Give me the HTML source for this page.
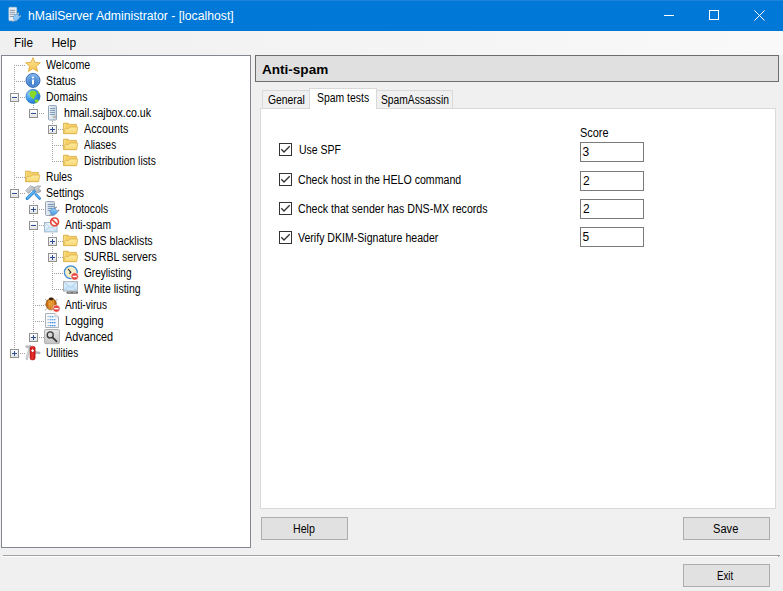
<!DOCTYPE html>
<html><head><meta charset="utf-8">
<style>
*{margin:0;padding:0;box-sizing:border-box}
html,body{width:783px;height:591px;overflow:hidden;background:#f0f0f0;font-family:"Liberation Sans",sans-serif;font-size:11px;color:#000;position:relative}
.a{position:absolute}
.x{position:absolute;white-space:nowrap;line-height:1;transform-origin:0 0}
#title{left:0;top:0;width:783px;height:31px;background:#0078d7;color:#fff}
#title .t{left:28px;top:7px;font-size:12px;line-height:16px;white-space:nowrap}
#menu{left:0;top:31px;width:783px;height:24px;background:linear-gradient(90deg,#f0f0f0,#f9f9f9)}
#menu span{position:absolute;top:4px;font-size:12px;line-height:16px}
#tree{left:1px;top:55px;width:250px;height:493px;background:#fff;border:1px solid #828790}
.tr{position:absolute;height:16px;line-height:16px;white-space:nowrap}
#hdr{left:255px;top:55px;width:524px;height:27px;background:#e0e0e0;border:1px solid #6d6d6d}
#hdr span{position:absolute;left:6px;top:5px;font-size:12.6px;line-height:16px;font-weight:bold;letter-spacing:.5px}
.tab{position:absolute;background:#f0f0f0;border:1px solid #d9d9d9;border-bottom:none;line-height:16px}
.tab span{position:absolute;top:2px}
#page{left:260px;top:108px;width:516px;height:401px;background:#fff;border:1px solid #d9d9d9}
.lbl{position:absolute;white-space:nowrap;line-height:16px}
.tb{position:absolute;width:64px;height:20px;border:1px solid #7a7a7a;background:#fff;line-height:16px}
.tb span{position:absolute;left:2px;top:2px}
.btn{position:absolute;background:#e1e1e1;border:1px solid #adadad;text-align:center;line-height:16px}
.btn span{position:absolute;left:0;right:0;top:3px}
</style></head><body>
<div id="title" class="a">
  <svg class="a" style="left:5px;top:4px" width="20" height="20" viewBox="0 0 20 20">
    <rect x="3.9" y="3.3" width="7.8" height="13.4" rx="0.8" fill="#e9eef2" stroke="#c0c8d0" stroke-width=".7"/>
    <path d="M5 6.3h5.2M5 8.3h5.2M5 10.3h5.2M5 12.5h4" stroke="#8898aa" stroke-width="1"/>
    <path d="M8.2 14.2 C8.4 11.2 10.8 9.6 12.6 10.1 L14.8 12.7 C14.5 15.1 12.1 16.7 9.4 16.5 Z" fill="#8cc6f6" stroke="#5b9ad6" stroke-width=".6"/>
    <path d="M12.6 10.1 L13.8 9M14.8 12.7 L15.8 11.6M9 16 L7.6 17.4" stroke="#e0d0b0" stroke-width="1.2"/>
  </svg>
  
  <div class="a" style="left:664px;top:15px;width:10px;height:1px;background:#fff"></div>
  <div class="a" style="left:709px;top:10px;width:10px;height:10px;border:1px solid #fff"></div>
  <svg class="a" style="left:754px;top:10px" width="12" height="12"><path d="M0.5 0.5L10.5 10.5M10.5 0.5L0.5 10.5" stroke="#fff" stroke-width="1"/></svg>
</div>
<div class="a" style="left:0;top:0;width:783px;height:1px;background:#1c84da"></div>
<div id="menu" class="a">
  
</div>
<div id="tree" class="a"></div>

<svg class="a" style="left:0;top:0" width="783" height="591"><defs>
<linearGradient id="gStar" x1="0" y1="0" x2="0" y2="1"><stop offset="0" stop-color="#fde9a0"/><stop offset="1" stop-color="#f4c24a"/></linearGradient>
<linearGradient id="gInfo" x1="0" y1="0" x2="0" y2="1"><stop offset="0" stop-color="#7fb5ec"/><stop offset="1" stop-color="#2e6cc2"/></linearGradient>
<radialGradient id="gGlobe" cx=".3" cy=".3" r=".85"><stop offset="0" stop-color="#9ad4ff"/><stop offset=".5" stop-color="#3c9ae6"/><stop offset="1" stop-color="#1a68c0"/></radialGradient>
<linearGradient id="gServer" x1="0" y1="0" x2="1" y2="0"><stop offset="0" stop-color="#eef3f8"/><stop offset="1" stop-color="#c4d3e2"/></linearGradient>
<linearGradient id="gFolder" x1="0" y1="0" x2="0" y2="1"><stop offset="0" stop-color="#fde9a0"/><stop offset="1" stop-color="#f7d870"/></linearGradient>
<linearGradient id="gExp" x1="0" y1="0" x2="0" y2="1"><stop offset="0" stop-color="#ffffff"/><stop offset="1" stop-color="#e2e2e2"/></linearGradient>
<radialGradient id="gBug" cx=".45" cy=".45" r=".65"><stop offset="0" stop-color="#e8901c"/><stop offset=".75" stop-color="#b85e08"/><stop offset="1" stop-color="#7c3c04"/></radialGradient>
<linearGradient id="gAdv" x1="0" y1="0" x2="0" y2="1"><stop offset="0" stop-color="#e4e4e4"/><stop offset="1" stop-color="#c4c4c4"/></linearGradient>
<linearGradient id="gGray" x1="0" y1="0" x2="1" y2="1"><stop offset="0" stop-color="#e4e6e8"/><stop offset="1" stop-color="#9ea4aa"/></linearGradient>
<linearGradient id="gDoc" x1="0" y1="0" x2="1" y2="0"><stop offset="0" stop-color="#e8eef4"/><stop offset="1" stop-color="#c8d4e0"/></linearGradient>
<linearGradient id="gPlug" x1="0" y1="0" x2="0" y2="1"><stop offset="0" stop-color="#94d0fa"/><stop offset="1" stop-color="#4a98e0"/></linearGradient>
<linearGradient id="gEnv" x1="0" y1="0" x2="0" y2="1"><stop offset="0" stop-color="#eaf4fc"/><stop offset="1" stop-color="#cfe6f8"/></linearGradient>
<linearGradient id="gEnv2" x1="0" y1="0" x2="0" y2="1"><stop offset="0" stop-color="#dff0fe"/><stop offset="1" stop-color="#c4e2fa"/></linearGradient>
<linearGradient id="gKnife" x1="0" y1="0" x2="1" y2="0"><stop offset="0" stop-color="#c81818"/><stop offset=".5" stop-color="#e83030"/><stop offset="1" stop-color="#c01010"/></linearGradient>
</defs><line x1="14.5" y1="65" x2="14.5" y2="353" stroke="#a0a0a0" stroke-width="1" stroke-dasharray="1 1"/><line x1="33.5" y1="105" x2="33.5" y2="113" stroke="#a0a0a0" stroke-width="1" stroke-dasharray="1 1"/><line x1="52.5" y1="121" x2="52.5" y2="161" stroke="#a0a0a0" stroke-width="1" stroke-dasharray="1 1"/><line x1="33.5" y1="201" x2="33.5" y2="337" stroke="#a0a0a0" stroke-width="1" stroke-dasharray="1 1"/><line x1="52.5" y1="233" x2="52.5" y2="289" stroke="#a0a0a0" stroke-width="1" stroke-dasharray="1 1"/><line x1="14" y1="65.5" x2="25" y2="65.5" stroke="#a0a0a0" stroke-width="1" stroke-dasharray="1 1"/><line x1="14" y1="81.5" x2="25" y2="81.5" stroke="#a0a0a0" stroke-width="1" stroke-dasharray="1 1"/><line x1="14" y1="97.5" x2="25" y2="97.5" stroke="#a0a0a0" stroke-width="1" stroke-dasharray="1 1"/><line x1="33" y1="113.5" x2="44" y2="113.5" stroke="#a0a0a0" stroke-width="1" stroke-dasharray="1 1"/><line x1="52" y1="129.5" x2="63" y2="129.5" stroke="#a0a0a0" stroke-width="1" stroke-dasharray="1 1"/><line x1="52" y1="145.5" x2="63" y2="145.5" stroke="#a0a0a0" stroke-width="1" stroke-dasharray="1 1"/><line x1="52" y1="161.5" x2="63" y2="161.5" stroke="#a0a0a0" stroke-width="1" stroke-dasharray="1 1"/><line x1="14" y1="177.5" x2="25" y2="177.5" stroke="#a0a0a0" stroke-width="1" stroke-dasharray="1 1"/><line x1="14" y1="193.5" x2="25" y2="193.5" stroke="#a0a0a0" stroke-width="1" stroke-dasharray="1 1"/><line x1="33" y1="209.5" x2="44" y2="209.5" stroke="#a0a0a0" stroke-width="1" stroke-dasharray="1 1"/><line x1="33" y1="225.5" x2="44" y2="225.5" stroke="#a0a0a0" stroke-width="1" stroke-dasharray="1 1"/><line x1="52" y1="241.5" x2="63" y2="241.5" stroke="#a0a0a0" stroke-width="1" stroke-dasharray="1 1"/><line x1="52" y1="257.5" x2="63" y2="257.5" stroke="#a0a0a0" stroke-width="1" stroke-dasharray="1 1"/><line x1="52" y1="273.5" x2="63" y2="273.5" stroke="#a0a0a0" stroke-width="1" stroke-dasharray="1 1"/><line x1="52" y1="289.5" x2="63" y2="289.5" stroke="#a0a0a0" stroke-width="1" stroke-dasharray="1 1"/><line x1="33" y1="305.5" x2="44" y2="305.5" stroke="#a0a0a0" stroke-width="1" stroke-dasharray="1 1"/><line x1="33" y1="321.5" x2="44" y2="321.5" stroke="#a0a0a0" stroke-width="1" stroke-dasharray="1 1"/><line x1="33" y1="337.5" x2="44" y2="337.5" stroke="#a0a0a0" stroke-width="1" stroke-dasharray="1 1"/><line x1="14" y1="353.5" x2="25" y2="353.5" stroke="#a0a0a0" stroke-width="1" stroke-dasharray="1 1"/><g transform="translate(25,57)"><path d="M8 0.6 L10.1 5.4 L15.3 5.8 L11.3 9.2 L12.6 14.4 L8 11.6 L3.4 14.4 L4.7 9.2 L0.7 5.8 L5.9 5.4 Z" fill="url(#gStar)" stroke="#e2ac3f" stroke-width="0.9" stroke-linejoin="round"/></g><g transform="translate(25,73)"><circle cx="8" cy="7.4" r="7" fill="url(#gInfo)" stroke="#2f66b4" stroke-width="0.9"/><circle cx="8" cy="7.4" r="5.7" fill="none" stroke="#8ebbec" stroke-width="0.7" opacity=".7"/><rect x="7" y="6.6" width="2" height="4.8" fill="#fff"/><circle cx="8" cy="4.5" r="1.1" fill="#fff"/></g><rect x="10.5" y="93.5" width="8" height="8" fill="url(#gExp)" stroke="#919191"/><path d="M12 97.5h5" stroke="#2c4f9a" stroke-width="1"/><g transform="translate(25,89)"><circle cx="8" cy="7.4" r="7.1" fill="url(#gGlobe)" stroke="#2a70b8" stroke-width="0.6"/><path d="M4.6 3.2 C6 1.5 9 1.3 11 2.3 L11.8 4.6 L10.6 6.3 L9.6 8.4 L8.3 10.6 L7.2 8.9 L5.6 7.7 L4.5 5.3 Z" fill="#8ad826"/><path d="M9.5 11 L12.2 10.3 L13.9 11.5 L12.6 13.3 L10.5 13.9 Z" fill="#8ad826"/><path d="M12.6 2 C13.9 2.8 14.8 4 15 5.3 L13.5 4.7 Z" fill="#8ad826"/></g><rect x="29.5" y="109.5" width="8" height="8" fill="url(#gExp)" stroke="#919191"/><path d="M31 113.5h5" stroke="#2c4f9a" stroke-width="1"/><g transform="translate(44,105)"><rect x="4.5" y="0.5" width="8" height="14.5" rx="1" fill="url(#gServer)" stroke="#93a7bb"/><path d="M6 3.5h5M6 5.5h5M6 7.5h5M6 9.5h5" stroke="#6f8cab" stroke-width="0.8"/><rect x="9" y="11.5" width="1.2" height="1" fill="#5cbf5c"/><rect x="10.5" y="11.5" width="1.2" height="1" fill="#e05050"/></g><rect x="48.5" y="125.5" width="8" height="8" fill="url(#gExp)" stroke="#919191"/><path d="M50 129.5h5" stroke="#2c4f9a" stroke-width="1"/><path d="M52.5 127v5" stroke="#2c4f9a" stroke-width="1"/><g transform="translate(63,121)"><path d="M0.5 2.2 L5.4 2.2 L6.4 3.4 L13.4 3.4 L13.4 12.6 L0.5 12.6 Z" fill="#f4d066" stroke="#d6aa44" stroke-width="0.8" stroke-linejoin="round"/><path d="M1.4 3.2 L1.4 11.8" stroke="#fbe49a" stroke-width=".8"/><path d="M2.2 7.4 L5.8 7.4 L7 6 L14.8 6 L13.6 12.6 L0.6 12.6 Z" fill="url(#gFolder)" stroke="#dcb24c" stroke-width="0.8" stroke-linejoin="round"/></g><g transform="translate(63,137)"><path d="M0.5 2.2 L5.4 2.2 L6.4 3.4 L13.4 3.4 L13.4 12.6 L0.5 12.6 Z" fill="#f4d066" stroke="#d6aa44" stroke-width="0.8" stroke-linejoin="round"/><path d="M1.4 3.2 L1.4 11.8" stroke="#fbe49a" stroke-width=".8"/><path d="M2.2 7.4 L5.8 7.4 L7 6 L14.8 6 L13.6 12.6 L0.6 12.6 Z" fill="url(#gFolder)" stroke="#dcb24c" stroke-width="0.8" stroke-linejoin="round"/></g><g transform="translate(63,153)"><path d="M0.5 2.2 L5.4 2.2 L6.4 3.4 L13.4 3.4 L13.4 12.6 L0.5 12.6 Z" fill="#f4d066" stroke="#d6aa44" stroke-width="0.8" stroke-linejoin="round"/><path d="M1.4 3.2 L1.4 11.8" stroke="#fbe49a" stroke-width=".8"/><path d="M2.2 7.4 L5.8 7.4 L7 6 L14.8 6 L13.6 12.6 L0.6 12.6 Z" fill="url(#gFolder)" stroke="#dcb24c" stroke-width="0.8" stroke-linejoin="round"/></g><g transform="translate(25,169)"><path d="M0.5 2.2 L5.4 2.2 L6.4 3.4 L13.4 3.4 L13.4 12.6 L0.5 12.6 Z" fill="#f4d066" stroke="#d6aa44" stroke-width="0.8" stroke-linejoin="round"/><path d="M1.4 3.2 L1.4 11.8" stroke="#fbe49a" stroke-width=".8"/><path d="M2.2 7.4 L5.8 7.4 L7 6 L14.8 6 L13.6 12.6 L0.6 12.6 Z" fill="url(#gFolder)" stroke="#dcb24c" stroke-width="0.8" stroke-linejoin="round"/></g><rect x="10.5" y="189.5" width="8" height="8" fill="url(#gExp)" stroke="#919191"/><path d="M12 193.5h5" stroke="#2c4f9a" stroke-width="1"/><g transform="translate(25,185)"><path d="M0.6 5.6 L5.5 0.8 L10 2.6 L9.2 6 L6.6 5.2 L3.6 8.6 Z" fill="url(#gGray)" stroke="#8a9096" stroke-width="0.6" stroke-linejoin="round"/><path d="M9.4 5.8 L10.4 1.6 L13 0.8 L15.8 1.2 L13.4 3.3 L15.8 5.4 L15.3 7.1 L11.6 7.6 Z" fill="url(#gGray)" stroke="#8a9096" stroke-width="0.6" stroke-linejoin="round"/><path d="M2.2 13.4 L9.3 6.6" stroke="#2f86d0" stroke-width="3.2" stroke-linecap="round"/><path d="M2.4 12.8 L9 6.6" stroke="#5cb4f2" stroke-width="1.6" stroke-linecap="round"/><path d="M11 9.6 L14.6 13.4" stroke="#2f86d0" stroke-width="2.8" stroke-linecap="round"/><path d="M11.2 9.5 L14.3 12.8" stroke="#5cb4f2" stroke-width="1.3" stroke-linecap="round"/></g><rect x="29.5" y="205.5" width="8" height="8" fill="url(#gExp)" stroke="#919191"/><path d="M31 209.5h5" stroke="#2c4f9a" stroke-width="1"/><path d="M33.5 207v5" stroke="#2c4f9a" stroke-width="1"/><g transform="translate(44,201)"><rect x="1.5" y="0.5" width="9" height="14" rx="1" fill="url(#gDoc)" stroke="#98a6b4"/><path d="M3.8 3.5h6M3.8 5.6h6M3.8 7.5h5M3.8 9.6h4" stroke="#6f8fb4" stroke-width="0.9"/><path d="M6 11 C6.3 8.5 9 6.8 11 7.5 L13.5 10.5 C13.2 12.8 10.5 14 7.5 13.8 Z" fill="url(#gPlug)" stroke="#3a7cc0" stroke-width="0.5"/><path d="M10.8 7.6 L12.6 5.8M13.4 10.4 L15.2 8.8" stroke="#707c88" stroke-width="1.1"/><path d="M6.8 13.4 L5 15" stroke="#909aa4" stroke-width="1"/></g><rect x="29.5" y="221.5" width="8" height="8" fill="url(#gExp)" stroke="#919191"/><path d="M31 225.5h5" stroke="#2c4f9a" stroke-width="1"/><g transform="translate(44,217)"><rect x="0.5" y="5.5" width="12.5" height="9.4" fill="url(#gEnv)" stroke="#9cb4cc" stroke-width="0.9"/><path d="M0.8 5.8 L6.8 11 L12.8 5.8M0.8 14.6 L5.2 10.2M12.8 14.6 L8.4 10.2" fill="none" stroke="#a8c4de" stroke-width="0.7"/><circle cx="10.6" cy="4.9" r="3.9" fill="#fff" fill-opacity=".85" stroke="#e8453a" stroke-width="1.7"/><path d="M7.9 2.2 L13.3 7.6" stroke="#e8453a" stroke-width="1.6"/></g><rect x="48.5" y="237.5" width="8" height="8" fill="url(#gExp)" stroke="#919191"/><path d="M50 241.5h5" stroke="#2c4f9a" stroke-width="1"/><path d="M52.5 239v5" stroke="#2c4f9a" stroke-width="1"/><g transform="translate(63,233)"><path d="M0.5 2.2 L5.4 2.2 L6.4 3.4 L13.4 3.4 L13.4 12.6 L0.5 12.6 Z" fill="#f4d066" stroke="#d6aa44" stroke-width="0.8" stroke-linejoin="round"/><path d="M1.4 3.2 L1.4 11.8" stroke="#fbe49a" stroke-width=".8"/><path d="M2.2 7.4 L5.8 7.4 L7 6 L14.8 6 L13.6 12.6 L0.6 12.6 Z" fill="url(#gFolder)" stroke="#dcb24c" stroke-width="0.8" stroke-linejoin="round"/></g><rect x="48.5" y="253.5" width="8" height="8" fill="url(#gExp)" stroke="#919191"/><path d="M50 257.5h5" stroke="#2c4f9a" stroke-width="1"/><path d="M52.5 255v5" stroke="#2c4f9a" stroke-width="1"/><g transform="translate(63,249)"><path d="M0.5 2.2 L5.4 2.2 L6.4 3.4 L13.4 3.4 L13.4 12.6 L0.5 12.6 Z" fill="#f4d066" stroke="#d6aa44" stroke-width="0.8" stroke-linejoin="round"/><path d="M1.4 3.2 L1.4 11.8" stroke="#fbe49a" stroke-width=".8"/><path d="M2.2 7.4 L5.8 7.4 L7 6 L14.8 6 L13.6 12.6 L0.6 12.6 Z" fill="url(#gFolder)" stroke="#dcb24c" stroke-width="0.8" stroke-linejoin="round"/></g><g transform="translate(63,265)"><circle cx="7.8" cy="7.2" r="6.4" fill="#f7eec4" stroke="#3d8ad8" stroke-width="1.3"/><path d="M5 4 L7.8 7.2 L6.4 8.6" fill="none" stroke="#222" stroke-width="1.1"/><circle cx="11.7" cy="11.4" r="3.7" fill="#e5413a" stroke="#fff" stroke-width="0.6"/><rect x="9.6" y="10.7" width="4.2" height="1.5" fill="#fff"/></g><g transform="translate(63,281)"><rect x="0.5" y="0.7" width="14" height="9.3" fill="url(#gEnv2)" stroke="#a4a8ac" stroke-width="0.9"/><path d="M0.8 1 L7.5 6.5 L14.2 1M0.8 9.8 L5.5 5.2M14.2 9.8 L9.5 5.2" fill="none" stroke="#9cc0e0" stroke-width="0.7"/><path d="M4.6 11.7 h3.6M9.6 11.7 h4.4" stroke="#6a6a6a" stroke-width="2.3" stroke-linecap="round"/><path d="M5 11.6 h2.6M10 11.6 h3.4" stroke="#c8c8c8" stroke-width=".6"/></g><g transform="translate(44,297)"><path d="M1 2 L3 4M13.5 2 L11.5 4M0.5 8 L2.5 8M0.8 13.5 L3 11.5M12 12 L13.5 13.5" stroke="#8a8a8a" stroke-width="0.7"/><ellipse cx="7.2" cy="7.2" rx="5.3" ry="5.8" fill="url(#gBug)" stroke="#8e4a10" stroke-width="0.6"/><path d="M5.2 2.2 L5.2 12.5M7.2 2 L7.2 13M9.2 2.2 L9.2 12.5" stroke="#ffc870" stroke-width="0.8" opacity=".85"/><ellipse cx="7.2" cy="1.9" rx="2.4" ry="1.4" fill="#3e2208"/><circle cx="12.4" cy="11.6" r="3.6" fill="#e5413a" stroke="#fff" stroke-width="0.6"/><rect x="10.3" y="10.9" width="4.2" height="1.5" fill="#fff"/></g><g transform="translate(44,313)"><path d="M1.5 0.5 L11 0.5 L14.5 4 L14.5 14.5 L1.5 14.5 Z" fill="#f7f8fa" stroke="#aab2bc"/><path d="M11 0.5 L11 4 L14.5 4" fill="#e8ecf0" stroke="#b8c0c8" stroke-width="0.7"/><path d="M3.5 3.7h1.3M3.5 6.7h1.3M3.5 9.6h1.3M3.5 12.6h1.3" stroke="#9aa4ae" stroke-width="1"/><path d="M5.6 3.7h4.5M5.6 6.7h6.4M5.6 9.6h6.4M5.6 12.6h6.4" stroke="#3f8ee8" stroke-width="1.1" stroke-dasharray="1.6 0.5"/></g><rect x="29.5" y="333.5" width="8" height="8" fill="url(#gExp)" stroke="#919191"/><path d="M31 337.5h5" stroke="#2c4f9a" stroke-width="1"/><path d="M33.5 335v5" stroke="#2c4f9a" stroke-width="1"/><g transform="translate(44,329)"><rect x="0.5" y="0.5" width="15" height="14.2" rx="1.5" fill="url(#gAdv)" stroke="#b0b0b0"/><circle cx="6.2" cy="5.9" r="3" fill="none" stroke="#383838" stroke-width="1.3"/><path d="M8.5 8.3 L12.6 12.3" stroke="#383838" stroke-width="1.8" stroke-linecap="round"/></g><rect x="10.5" y="349.5" width="8" height="8" fill="url(#gExp)" stroke="#919191"/><path d="M12 353.5h5" stroke="#2c4f9a" stroke-width="1"/><path d="M14.5 351v5" stroke="#2c4f9a" stroke-width="1"/><g transform="translate(25,345)"><path d="M0.5 1 L5.8 0.6 L6 2.6 L1.5 2.8 Z" fill="#c4c8cc" stroke="#8e9296" stroke-width="0.5"/><path d="M4 3 L5.4 3.6 L2.2 14.8 L0.8 14 Z" fill="#e4e8ea" stroke="#9aa0a4" stroke-width="0.6"/><path d="M10 6.3 L15.2 7.2 L14.8 8.8 L10 8.6 Z" fill="#b4b8bc" stroke="#8e9296" stroke-width="0.4"/><rect x="5" y="1.3" width="5.2" height="13.6" rx="2" fill="url(#gKnife)" stroke="#b01818" stroke-width="0.5"/><path d="M7.6 4.2 v2.8 M6.2 5.6 h2.8" stroke="#fff" stroke-width="1.2"/></g></svg>

<div id="hdr" class="a"></div>

<div class="tab" style="left:262px;top:90px;width:48px;height:19px"></div>
<div class="tab" style="left:376px;top:90px;width:77px;height:19px"></div>
<div id="page" class="a"></div>
<div class="tab" style="left:309px;top:88px;width:68px;height:21px;background:#fff"></div>
<svg class="a" style="left:279px;top:143px" width="13" height="13"><rect x="0.5" y="0.5" width="12" height="12" fill="#fff" stroke="#333"/><path d="M2.3 6.3 L5 9 L10.7 3.3" fill="none" stroke="#333" stroke-width="1.35"/></svg><div class="tb" style="left:580px;top:142px"></div><svg class="a" style="left:279px;top:173px" width="13" height="13"><rect x="0.5" y="0.5" width="12" height="12" fill="#fff" stroke="#333"/><path d="M2.3 6.3 L5 9 L10.7 3.3" fill="none" stroke="#333" stroke-width="1.35"/></svg><div class="tb" style="left:580px;top:171px"></div><svg class="a" style="left:279px;top:202px" width="13" height="13"><rect x="0.5" y="0.5" width="12" height="12" fill="#fff" stroke="#333"/><path d="M2.3 6.3 L5 9 L10.7 3.3" fill="none" stroke="#333" stroke-width="1.35"/></svg><div class="tb" style="left:580px;top:199px"></div><svg class="a" style="left:279px;top:231px" width="13" height="13"><rect x="0.5" y="0.5" width="12" height="12" fill="#fff" stroke="#333"/><path d="M2.3 6.3 L5 9 L10.7 3.3" fill="none" stroke="#333" stroke-width="1.35"/></svg><div class="tb" style="left:580px;top:227px"></div>
<div class="btn" style="left:261px;top:517px;width:87px;height:23px"></div>
<div class="btn" style="left:683px;top:517px;width:87px;height:23px"></div>
<div class="a" style="left:3px;top:555px;width:777px;height:1px;background:#a0a0a0"></div><div class="a" style="left:778px;top:556px;width:1px;height:1px;background:#a0a0a0"></div>
<div class="a" style="left:3px;top:556px;width:775px;height:1px;background:#fff"></div>
<div class="btn" style="left:683px;top:564px;width:87px;height:23px"></div>
<div class="x" style="left:46.3px;top:59px;font:12px 'Liberation Sans',sans-serif;line-height:1;color:#000;transform:scaleX(0.8878)">Welcome</div><div class="x" style="left:45.95px;top:75px;font:12px 'Liberation Sans',sans-serif;line-height:1;color:#000;transform:scaleX(0.8758)">Status</div><div class="x" style="left:45.95px;top:91px;font:12px 'Liberation Sans',sans-serif;line-height:1;color:#000;transform:scaleX(0.8739)">Domains</div><div class="x" style="left:64.25px;top:107px;font:12px 'Liberation Sans',sans-serif;line-height:1;color:#000;transform:scaleX(0.8806)">hmail.sajbox.co.uk</div><div class="x" style="left:84.0px;top:123px;font:12px 'Liberation Sans',sans-serif;line-height:1;color:#000;transform:scaleX(0.898)">Accounts</div><div class="x" style="left:84.0px;top:139px;font:12px 'Liberation Sans',sans-serif;line-height:1;color:#000;transform:scaleX(0.8308)">Aliases</div><div class="x" style="left:83.66px;top:155px;font:12px 'Liberation Sans',sans-serif;line-height:1;color:#000;transform:scaleX(0.8542)">Distribution lists</div><div class="x" style="left:45.96px;top:171px;font:12px 'Liberation Sans',sans-serif;line-height:1;color:#000;transform:scaleX(0.8533)">Rules</div><div class="x" style="left:45.95px;top:187px;font:12px 'Liberation Sans',sans-serif;line-height:1;color:#000;transform:scaleX(0.8786)">Settings</div><div class="x" style="left:65.35px;top:203px;font:12px 'Liberation Sans',sans-serif;line-height:1;color:#000;transform:scaleX(0.8653)">Protocols</div><div class="x" style="left:64.9px;top:219px;font:12px 'Liberation Sans',sans-serif;line-height:1;color:#000;transform:scaleX(0.8509)">Anti-spam</div><div class="x" style="left:84.14px;top:235px;font:12px 'Liberation Sans',sans-serif;line-height:1;color:#000;transform:scaleX(0.8882)">DNS blacklists</div><div class="x" style="left:84.15px;top:251px;font:12px 'Liberation Sans',sans-serif;line-height:1;color:#000;transform:scaleX(0.8852)">SURBL servers</div><div class="x" style="left:84.0px;top:267px;font:12px 'Liberation Sans',sans-serif;line-height:1;color:#000;transform:scaleX(0.8393)">Greylisting</div><div class="x" style="left:84.0px;top:283px;font:12px 'Liberation Sans',sans-serif;line-height:1;color:#000;transform:scaleX(0.875)">White listing</div><div class="x" style="left:65.2px;top:299px;font:12px 'Liberation Sans',sans-serif;line-height:1;color:#000;transform:scaleX(0.84)">Anti-virus</div><div class="x" style="left:64.84px;top:315px;font:12px 'Liberation Sans',sans-serif;line-height:1;color:#000;transform:scaleX(0.9049)">Logging</div><div class="x" style="left:65.2px;top:331px;font:12px 'Liberation Sans',sans-serif;line-height:1;color:#000;transform:scaleX(0.9019)">Advanced</div><div class="x" style="left:46.27px;top:347px;font:12px 'Liberation Sans',sans-serif;line-height:1;color:#000;transform:scaleX(0.8316)">Utilities</div><div class="x" style="left:28.39px;top:10px;font:12px 'Liberation Sans',sans-serif;line-height:1;color:#fff;transform:scaleX(1.018)">hMailServer Administrator - [localhost]</div><div class="x" style="left:14.31px;top:37px;font:12px 'Liberation Sans',sans-serif;line-height:1;color:#000;transform:scaleX(0.9778)">File</div><div class="x" style="left:51.4px;top:37px;font:12px 'Liberation Sans',sans-serif;line-height:1;color:#000;transform:scaleX(1.0)">Help</div><div class="x" style="left:262.3px;top:64px;font:bold 12.5px 'Liberation Sans',sans-serif;line-height:1;color:#000;transform:scaleX(1.0836)">Anti-spam</div><div class="x" style="left:267.9px;top:94px;font:12px 'Liberation Sans',sans-serif;line-height:1;color:#000;transform:scaleX(0.8643)">General</div><div class="x" style="left:316.65px;top:92px;font:12px 'Liberation Sans',sans-serif;line-height:1;color:#000;transform:scaleX(0.8678)">Spam tests</div><div class="x" style="left:380.96px;top:94px;font:12px 'Liberation Sans',sans-serif;line-height:1;color:#000;transform:scaleX(0.8551)">SpamAssassin</div><div class="x" style="left:579.74px;top:127px;font:12px 'Liberation Sans',sans-serif;line-height:1;color:#000;transform:scaleX(0.91)">Score</div><div class="x" style="left:298.55px;top:144px;font:12px 'Liberation Sans',sans-serif;line-height:1;color:#000;transform:scaleX(0.8745)">Use SPF</div><div class="x" style="left:298.3px;top:174px;font:12px 'Liberation Sans',sans-serif;line-height:1;color:#000;transform:scaleX(0.8832)">Check host in the HELO command</div><div class="x" style="left:297.5px;top:203px;font:12px 'Liberation Sans',sans-serif;line-height:1;color:#000;transform:scaleX(0.8855)">Check that sender has DNS-MX records</div><div class="x" style="left:298.0px;top:232px;font:12px 'Liberation Sans',sans-serif;line-height:1;color:#000;transform:scaleX(0.88)">Verify DKIM-Signature header</div><div class="x" style="left:582.6px;top:146px;font:12px 'Liberation Sans',sans-serif;line-height:1;color:#000;transform:scaleX(1.0)">3</div><div class="x" style="left:583.0px;top:175px;font:12px 'Liberation Sans',sans-serif;line-height:1;color:#000;transform:scaleX(1.0)">2</div><div class="x" style="left:583.0px;top:203px;font:12px 'Liberation Sans',sans-serif;line-height:1;color:#000;transform:scaleX(1.0)">2</div><div class="x" style="left:582.6px;top:231px;font:12px 'Liberation Sans',sans-serif;line-height:1;color:#000;transform:scaleX(1.0)">5</div><div class="x" style="left:293.15px;top:523px;font:12px 'Liberation Sans',sans-serif;line-height:1;color:#000;transform:scaleX(0.887)">Help</div><div class="x" style="left:712.93px;top:523px;font:12px 'Liberation Sans',sans-serif;line-height:1;color:#000;transform:scaleX(0.9269)">Save</div><div class="x" style="left:717.08px;top:570px;font:12px 'Liberation Sans',sans-serif;line-height:1;color:#000;transform:scaleX(0.8053)">Exit</div>
</body></html>
